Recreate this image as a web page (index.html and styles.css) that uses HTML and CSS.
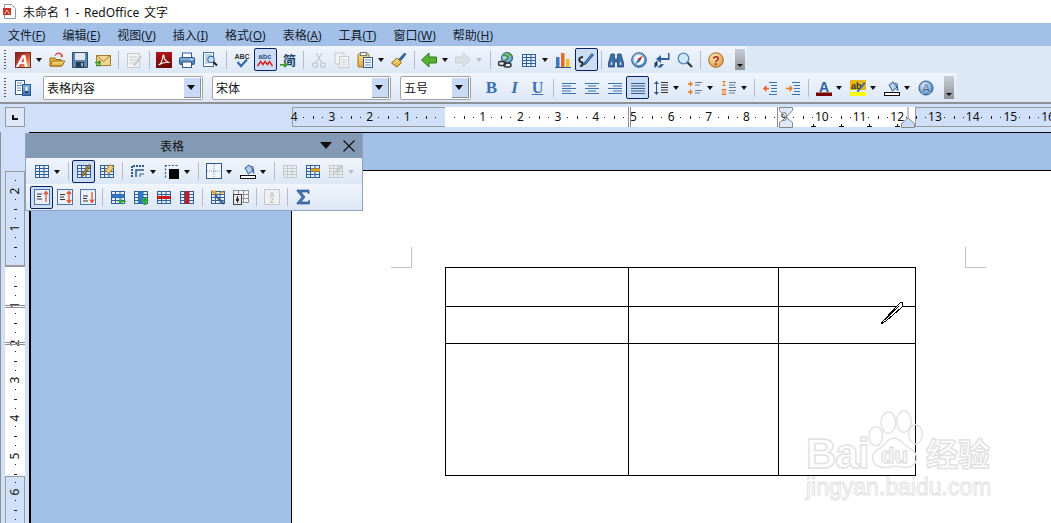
FILE: index.html
```html
<!DOCTYPE html>
<html lang="zh-CN">
<head>
<meta charset="utf-8">
<title>未命名 1 - RedOffice 文字</title>
<link rel="stylesheet" href="styles.css">
</head>
<body>
<svg class="defs" xmlns="http://www.w3.org/2000/svg">
<defs>
<linearGradient id="gRed" x1="0" y1="0" x2="1" y2="1"><stop offset="0" stop-color="#7a1c14"/><stop offset=".5" stop-color="#d04a30"/><stop offset="1" stop-color="#f2c090"/></linearGradient>
<linearGradient id="gPdf" x1="0" y1="0" x2="0" y2="1"><stop offset="0" stop-color="#b01818"/><stop offset="1" stop-color="#6d0808"/></linearGradient>
<linearGradient id="gGold" x1="0" y1="0" x2="0" y2="1"><stop offset="0" stop-color="#fbe08a"/><stop offset="1" stop-color="#e3a63a"/></linearGradient>
<linearGradient id="gBlue" x1="0" y1="0" x2="0" y2="1"><stop offset="0" stop-color="#8fb4de"/><stop offset="1" stop-color="#3c6ea8"/></linearGradient>
<radialGradient id="gHelp" cx=".4" cy=".35" r=".7"><stop offset="0" stop-color="#fff0c8"/><stop offset="1" stop-color="#d9963a"/></radialGradient>
<radialGradient id="gGlobe" cx=".4" cy=".35" r=".7"><stop offset="0" stop-color="#e4f0fb"/><stop offset="1" stop-color="#3f7cc0"/></radialGradient>
<g id="grid"><rect x="1.5" y="2.5" width="13" height="12" fill="#eaf1fa" stroke="#2f5f9c"/><path d="M1.5 5.5h13M1.5 8.5h13M1.5 11.5h13M5.5 2.5v12M10 2.5v12" stroke="#2f5f9c" fill="none"/></g>
<g id="gridg"><rect x="1.5" y="2.5" width="13" height="12" fill="#eceeef" stroke="#c4c8cc"/><path d="M1.5 5.5h13M1.5 8.5h13M1.5 11.5h13M5.5 2.5v12M10 2.5v12" stroke="#c4c8cc" fill="none"/></g>
<g id="bucket"><path d="M5 5l4-3 4 5-4.5 4z" fill="#b9d0ea" stroke="#26578f"/><path d="M11 3l2 1 .5 4" fill="none" stroke="#26578f"/><path d="M13 7l1.500 2.500a1 1 0 0 1-2 0z" fill="#26578f"/><rect x=".5" y="12.500" width="15" height="3" fill="#fff" stroke="#111"/></g>
</defs>
<symbol id="open" viewBox="0 0 16 16"><path d="M1 14V6h5l1 1.500h5V14z" fill="#e8b347" stroke="#9a6d14"/><path d="M1 14l2.500-5H16l-3 5z" fill="url(#gGold)" stroke="#9a6d14"/><path d="M6 3.500C8 .5 11 .5 12.500 3" fill="none" stroke="#d4362a" stroke-width="1.300"/><path d="M11 4.500l3 .5-.5-3z" fill="#d4362a"/></symbol>
<symbol id="save" viewBox="0 0 16 16"><path d="M.5.5h15v15H.5z" fill="#5e83ad" stroke="#2c4f7a"/><rect x="3" y="1" width="10" height="7" fill="#dfe8f2"/><rect x="4" y="10" width="8" height="5.500" fill="#23384f"/><rect x="9" y="11" width="2" height="3.500" fill="#9ab4cf"/></symbol>
<symbol id="mail" viewBox="0 0 16 16"><rect x="1.500" y="3.500" width="14" height="10" fill="#efd48f" stroke="#a47f30"/><path d="M1.500 3.500l7 6 7-6" fill="none" stroke="#a47f30"/><path d="M0 10.500h5M3.500 8.500l2 2-2 2M6 13.500H1" stroke="#2f9a2a" stroke-width="1.300" fill="none"/></symbol>
<symbol id="edit" viewBox="0 0 16 16"><rect x="1.500" y="1.500" width="12" height="14" fill="#f1f2f3" stroke="#c6c9cc"/><path d="M3.500 5h8M3.500 8h6M3.500 11h4" stroke="#c6c9cc"/><path d="M8 12l6-8 1.500 1-6 8-2 .5z" fill="#d2d4d6" stroke="#b9bcbf" stroke-width=".7"/></symbol>
<symbol id="pdf" viewBox="0 0 16 16"><rect width="16" height="16" fill="url(#gPdf)"/><path d="M2.500 13c2-1 4-5 4.500-9 .2-1.500 1.300-1.500 1 .5-.3 2.500 3 6 5.500 6-2.500-.5-7 0-11 2.500z" fill="none" stroke="#fff" stroke-width="1.100"/></symbol>
<symbol id="print" viewBox="0 0 16 16"><rect x="3.500" y="1" width="9" height="5" fill="#fff" stroke="#2d5a8f"/><rect x=".5" y="5.500" width="15" height="7" rx="1" fill="url(#gBlue)" stroke="#2d5a8f"/><rect x="3.500" y="10" width="9" height="5.500" fill="#fff" stroke="#2d5a8f"/><rect x="11.500" y="7" width="2" height="1" fill="#fff"/></symbol>
<symbol id="preview" viewBox="0 0 16 16"><rect x="1.500" y=".5" width="10" height="14" fill="#fff" stroke="#3f6fa5"/><path d="M3 3h7M3 5h4M3 7h3M3 9h3M3 11h4" stroke="#7ea3cc"/><circle cx="9" cy="7.500" r="3.300" fill="#bfe2f5" stroke="#2d5a8f"/><path d="M11.500 10l3.500 3.500" stroke="#222" stroke-width="2"/></symbol>
<symbol id="cut" viewBox="0 0 16 16"><path d="M5 1l6 10M11 1L5 11" stroke="#c3c6c9" stroke-width="1.200"/><circle cx="4" cy="13" r="2.300" fill="none" stroke="#c3c6c9" stroke-width="1.200"/><circle cx="12" cy="13" r="2.300" fill="none" stroke="#c3c6c9" stroke-width="1.200"/></symbol>
<symbol id="copy" viewBox="0 0 16 16"><rect x="1" y="1" width="9" height="11" fill="#f2f3f4" stroke="#c6c9cc"/><rect x="5.500" y="4.500" width="9" height="11" fill="#f2f3f4" stroke="#c6c9cc"/><path d="M7.500 8h5M7.500 10.500h5M7.500 13h5" stroke="#cfd2d5"/></symbol>
<symbol id="paste" viewBox="0 0 16 16"><rect x="1" y="2" width="11" height="13" rx="1" fill="url(#gGold)" stroke="#9a7420"/><rect x="3.500" y=".5" width="6" height="3" fill="#eee" stroke="#777"/><rect x="6.500" y="5.500" width="9" height="10" fill="#fff" stroke="#2d5a8f"/><path d="M8 8h6M8 10.500h6M8 13h6" stroke="#5f8cbe"/></symbol>
<symbol id="brush" viewBox="0 0 16 16"><path d="M.5 11L6 6l4.500 4.500L6 15z" fill="url(#gGold)" stroke="#8a6a18"/><path d="M8 7l5-5.500c1-1 2.500.5 1.500 1.500L10 8.500z" fill="#3c6ea8" stroke="#23466e" stroke-width=".7"/></symbol>
<symbol id="back" viewBox="0 0 16 16"><path d="M.5 8L8 1v4h7.500v6H8v4z" fill="#56b030" stroke="#2f7a1a"/></symbol>
<symbol id="fwd" viewBox="0 0 16 16"><path d="M15.500 8L8 1v4H.5v6H8v4z" fill="#dcdfe3" stroke="#cdd0d4"/></symbol>
<symbol id="link" viewBox="0 0 16 16"><circle cx="9" cy="6" r="5.500" fill="url(#gGlobe)" stroke="#2d5a8f"/><path d="M5 3c2 0 4 .5 5 2s-2 2-3 4M10 1c1 1 3 2 4 3" fill="none" stroke="#3f9c32" stroke-width="2"/><rect x=".5" y="9.500" width="7" height="4" rx="2" fill="none" stroke="#333" stroke-width="1.500"/><rect x="6" y="11" width="7" height="4" rx="2" fill="none" stroke="#333" stroke-width="1.500"/></symbol>
<symbol id="table" viewBox="0 0 16 16"><use href="#grid"/></symbol>
<symbol id="chart" viewBox="0 0 16 16"><rect x="1" y="5" width="3.500" height="10" fill="#3f78bd"/><rect x="6" y="1" width="3.500" height="14" fill="#e86a20"/><rect x="11" y="7" width="3.500" height="8" fill="#f0c020"/><path d="M0 15.500h16" stroke="#2d5a8f"/></symbol>
<symbol id="pen" viewBox="0 0 16 16"><path d="M5 5C1 5 0 9 3 10c3 1 2 4-1 4" fill="none" stroke="#2b2b2b" stroke-width="2"/><path d="M6 11l8-9.500 1.500 1.500L8 12l-2.500 1z" fill="#4a7fc0" stroke="#23466e" stroke-width=".8"/></symbol>
<symbol id="bino" viewBox="0 0 16 16"><path d="M3 2h3.500v5h3V2H13l2.500 9v4H9.500v-5h-3v5H.5v-4z" fill="#3c6ea8" stroke="#23466e" stroke-width=".8"/><path d="M3.500 10v3M12.500 10v3" stroke="#cfe0f5" stroke-width="1.400"/></symbol>
<symbol id="compass" viewBox="0 0 16 16"><circle cx="8" cy="8" r="7.300" fill="url(#gGlobe)" stroke="#2d5a8f"/><circle cx="8" cy="8" r="5" fill="#f4f8fc"/><path d="M12 3.500L9 9 6.500 7z" fill="#d62020"/><path d="M4 12.500L7 7l2.500 2z" fill="#3c6ea8"/></symbol>
<symbol id="arrows" viewBox="0 0 16 16"><path d="M14 1v5H7V3L2 7l5 4V8h8.500V1z" fill="#2d5f9e"/><path d="M.5 11l3-2.500v5l-3 2.500z" fill="#1e3f6b"/><path d="M7 12h3l-3 3.500H3z" fill="#2d5f9e"/></symbol>
<symbol id="zoom" viewBox="0 0 16 16"><circle cx="6.500" cy="6.500" r="5.300" fill="#cfeafa" stroke="#4f86bd" stroke-width="1.300"/><path d="M10.500 10.500l4.500 4.500" stroke="#333" stroke-width="2.200"/></symbol>
<symbol id="style" viewBox="0 0 16 16"><rect x=".5" y=".5" width="9" height="14" fill="#fff" stroke="#2d5a8f"/><path d="M2 3h5M2 5.500h5M2 8h4M2 10.500h4" stroke="#5f8cbe"/><rect x="7.500" y="4.500" width="8" height="11" fill="url(#gBlue)" stroke="#2d5a8f"/><path d="M11.500 7v5" stroke="#fff" stroke-width="2"/><rect x="10" y="11" width="3" height="2" fill="#1e3f6b"/></symbol>
<symbol id="al" viewBox="0 0 16 16"><path d="M1 3.500h14M1 6h9M1 8.500h14M1 11h9M1 13.500h14" stroke="#3a73b4"/></symbol>
<symbol id="ac" viewBox="0 0 16 16"><path d="M1 3.500h14M4 6h8M1 8.500h14M4 11h8M1 13.500h14" stroke="#3a73b4"/></symbol>
<symbol id="ar" viewBox="0 0 16 16"><path d="M1 3.500h14M6 6h9M1 8.500h14M6 11h9M1 13.500h14" stroke="#3a73b4"/></symbol>
<symbol id="aj" viewBox="0 0 16 16"><path d="M1 3.500h14M1 6h14M1 8.500h14M1 11h14M1 13.500h14" stroke="#3a5f8f"/></symbol>
<symbol id="ls" viewBox="0 0 16 16"><path d="M3.500 1.500v13" stroke="#2d5a8f"/><path d="M1 4l2.500-3L6 4zM1 12l2.500 3L6 12z" fill="#2d5a8f"/><path d="M8 2.500h7M8 5h7M8 7.500h7M8 10h7M8 12.500h7" stroke="#333"/></symbol>
<symbol id="plus" viewBox="0 0 16 16"><path d="M1 4h5M3.500 1.500v5M1 12h5M3.500 9.500v5" stroke="#e87a20" stroke-width="1.300"/><path d="M8 2.500h7M8 5h5M8 10.500h7M8 13h5" stroke="#5f7f9f"/></symbol>
<symbol id="num" viewBox="0 0 16 16"><path d="M1.500 1.500h3M3 1.500v4M1.500 5.500h3M.5 9.500h5M2 9.500v5M4 9.500v5M.5 14.500h5" stroke="#e87a20" fill="none"/><path d="M8 2.500h7M8 5h6M8 7.500h7M8 10.500h7M8 13h6" stroke="#5f7f9f"/></symbol>
<symbol id="ind1" viewBox="0 0 16 16"><path d="M7 2.500h8M9 5.500h6M9 8.500h6M9 11.500h6M7 14.500h8" stroke="#3a73b4"/><path d="M7 8.500H2M4.500 6L2 8.500 4.500 11" fill="none" stroke="#e85a20" stroke-width="1.400"/></symbol>
<symbol id="ind2" viewBox="0 0 16 16"><path d="M7 2.500h8M9 5.500h6M9 8.500h6M9 11.500h6M7 14.500h8" stroke="#3a73b4"/><path d="M1 8.500h6M4.500 6L7 8.500 4.500 11" fill="none" stroke="#e87a20" stroke-width="1.400"/></symbol>
<symbol id="bg" viewBox="0 0 16 16"><use href="#bucket"/></symbol>
<symbol id="tdraw" viewBox="0 0 16 16"><use href="#grid"/><path d="M6 11l7-9.500 2 1.500-7 9.500-2.500 1z" fill="#b08a40" stroke="#5a4418" stroke-width=".8"/></symbol>
<symbol id="terase" viewBox="0 0 16 16"><use href="#grid"/><path d="M6 8l5-6.500 4 2.500-5 6.500z" fill="#f0c878" stroke="#9a7420" stroke-width=".8"/></symbol>
<symbol id="bstyle" viewBox="0 0 16 16"><path d="M2 14V3h12" fill="none" stroke="#2d5a8f" stroke-width="2" stroke-dasharray="2 1"/><path d="M6 14V7h8" fill="none" stroke="#2d5a8f" stroke-width="1.500"/><path d="M10 14v-3h4" fill="none" stroke="#2d5a8f"/></symbol>
<symbol id="bcolor" viewBox="0 0 16 16"><path d="M1 2.500h14M1.500 2v13" stroke="#2d5a8f" stroke-width="1.200" stroke-dasharray="2 1.500"/><rect x="5" y="6" width="10" height="10" fill="#050505"/></symbol>
<symbol id="cell" viewBox="0 0 16 16"><rect x=".5" y=".5" width="15" height="15" fill="#f4f8fc" stroke="#2d5a8f"/><path d="M8 1v14M1 8h14" stroke="#6f95c0" stroke-dasharray="1 1"/></symbol>
<symbol id="gridoff" viewBox="0 0 16 16"><use href="#gridg"/></symbol>
<symbol id="rowsel" viewBox="0 0 16 16"><use href="#grid"/><rect x="6" y="5.500" width="9" height="3" fill="#e8a020"/></symbol>
<symbol id="afmt" viewBox="0 0 16 16"><use href="#gridg"/><path d="M7 8l6-6 2 2-6 6-2.500.5z" fill="#c8ccd0"/></symbol>
<symbol id="vt" viewBox="0 0 16 16"><rect x=".5" y=".5" width="15" height="15" fill="#eaf1fa" stroke="#4a76a8"/><path d="M3 5h5M3 7.500h4M3 10h5" stroke="#333"/><path d="M12 13V3M9.800 5.500L12 2.500l2.200 3" fill="none" stroke="#e04a20" stroke-width="1.200"/></symbol>
<symbol id="vmid" viewBox="0 0 16 16"><rect x=".5" y=".5" width="15" height="15" fill="#eaf1fa" stroke="#4a76a8"/><path d="M3 5.500h5M3 8h4M3 10.500h5" stroke="#333"/><path d="M12 2.500v11M9.800 5L12 2.500 14.200 5M9.800 11l2.200 2.500 2.200-2.500" fill="none" stroke="#e04a20" stroke-width="1.200"/></symbol>
<symbol id="vb" viewBox="0 0 16 16"><rect x=".5" y=".5" width="15" height="15" fill="#eaf1fa" stroke="#4a76a8"/><path d="M3 7h5M3 9.500h4M3 12h5" stroke="#333"/><path d="M12 3v10M9.800 10.500L12 13.500l2.200-3" fill="none" stroke="#e04a20" stroke-width="1.200"/></symbol>
<symbol id="irow" viewBox="0 0 16 16"><use href="#grid"/><rect x="1.500" y="5.500" width="13" height="3" fill="#2d7ac0"/><path d="M16 12h-4V9.500L8 12.500l4 3V13h4z" fill="#2aa82a"/></symbol>
<symbol id="icol" viewBox="0 0 16 16"><use href="#grid"/><rect x="5.500" y="2.500" width="4.500" height="12" fill="#2d7ac0"/><path d="M12 8l4 4h-2.500v4h-3v-4H8z" fill="#2aa82a"/></symbol>
<symbol id="drow" viewBox="0 0 16 16"><use href="#grid"/><rect x="1" y="7" width="14" height="3" fill="#c81818"/></symbol>
<symbol id="dcol" viewBox="0 0 16 16"><use href="#grid"/><rect x="6" y="2" width="4" height="13" fill="#c81818"/></symbol>
<symbol id="wand" viewBox="0 0 16 16"><use href="#grid"/><path d="M1 1l3 1 2-1v2l2 2H5L4 7 3 4.500z" fill="#e8a020"/><path d="M12 1l1 2 2 .5-2 .5-1 2-.5-2-2-.5 2-.5z" fill="#e8a020"/><path d="M5 6l9 9" stroke="#3c5f8f" stroke-width="2.200"/></symbol>
<symbol id="prop" viewBox="0 0 16 16"><rect x=".5" y="1.500" width="15" height="12" fill="#f1f3f6" stroke="#8d949c"/><path d="M5.500 1.500v12M10.500 1.500v12M.5 5.500h15M.5 9.500h15" stroke="#8d949c"/><rect x=".5" y="5.500" width="8" height="10" fill="#e6e8ea" stroke="#444"/><path d="M4.500 7v7" stroke="#333"/><rect x="3" y="9.500" width="3" height="2.500" fill="#333"/></symbol>
<symbol id="sum" viewBox="0 0 16 16"><path d="M2 1h12v4l-1.500-2H6l4 5-4 5h7l1.500-2v4H2v-1l5-6-5-6z" fill="#3f78bd" stroke="#23466e" stroke-width=".6"/></symbol>
</svg>

<div class="title"><svg class="doc" viewBox="0 0 13 15"><path d="M1.500.5h7l4 4v10h-11z" fill="#fff" stroke="#8a97a5"/><rect x="0" y="4" width="8" height="7" fill="#c8362a"/><path d="M1.500 10l2.500-4 2.500 4" fill="none" stroke="#f3c0b0"/></svg><span>未命名 1 - RedOffice 文字</span></div>

<nav class="menu"><span>文件(<u>F</u>)</span><span>编辑(<u>E</u>)</span><span>视图(<u>V</u>)</span><span>插入(<u>I</u>)</span><span>格式(<u>O</u>)</span><span>表格(<u>A</u>)</span><span>工具(<u>T</u>)</span><span>窗口(<u>W</u>)</span><span>帮助(<u>H</u>)</span></nav>

<div class="band one"><div class="bar">
<i class="grip"></i>
<b class="btn"><svg class="i" viewBox="0 0 16 16"><rect x=".5" y=".5" width="15" height="15" fill="url(#gRed)" stroke="#7a2b22"/><text x="7.500" y="14.500" text-anchor="middle" font-family="Liberation Sans" font-style="italic" font-size="17" fill="#fff">A</text></svg></b><b class="arr"></b>
<b class="btn"><svg class="i"><use href="#open"/></svg></b>
<b class="btn"><svg class="i"><use href="#save"/></svg></b>
<b class="btn"><svg class="i"><use href="#mail"/></svg></b>
<i class="sep w8"></i>
<b class="btn"><svg class="i"><use href="#edit"/></svg></b>
<i class="sep"></i>
<b class="btn"><svg class="i"><use href="#pdf"/></svg></b>
<b class="btn"><svg class="i"><use href="#print"/></svg></b>
<b class="btn"><svg class="i"><use href="#preview"/></svg></b>
<i class="sep w9"></i>
<b class="btn"><svg class="i" viewBox="0 0 16 16"><text x="8" y="6.500" text-anchor="middle" font-family="Liberation Sans" font-weight="700" font-size="7" fill="#333">ABC</text><path d="M3.500 10l3.500 4 6-6.500" fill="none" stroke="#2f6db0" stroke-width="2.200"/></svg></b>
<b class="btn on"><svg class="i" viewBox="0 0 16 16"><text x="8" y="7" text-anchor="middle" font-family="Liberation Sans" font-size="7.500" fill="#2d5a8f">abc</text><path d="M.5 14l3-4.500 2.500 3 2-3 2.500 3 2-3 3 4.500" fill="none" stroke="#d62020" stroke-width="1.500"/></svg></b>
<b class="btn"><svg class="i" viewBox="0 0 16 16"><text x="9.500" y="12.500" text-anchor="middle" font-family="Noto Sans CJK SC" font-weight="700" font-size="13" fill="#23466e">简</text><path d="M0 12h4V9.500l4 3.500-4 3v-2.200H0z" fill="#3f9c32"/></svg></b>
<i class="sep w8"></i>
<b class="btn"><svg class="i"><use href="#cut"/></svg></b>
<b class="btn"><svg class="i"><use href="#copy"/></svg></b>
<b class="btn"><svg class="i"><use href="#paste"/></svg></b><b class="arr"></b>
<b class="btn"><svg class="i"><use href="#brush"/></svg></b>
<i class="sep"></i>
<b class="btn"><svg class="i"><use href="#back"/></svg></b><b class="arr"></b>
<b class="btn"><svg class="i"><use href="#fwd"/></svg></b><b class="arr off"></b>
<i class="sep w9"></i>
<b class="btn"><svg class="i"><use href="#link"/></svg></b>
<b class="btn"><svg class="i"><use href="#table"/></svg></b><b class="arr"></b>
<b class="btn"><svg class="i"><use href="#chart"/></svg></b>
<b class="btn on"><svg class="i"><use href="#pen"/></svg></b>
<i class="sep"></i>
<b class="btn"><svg class="i"><use href="#bino"/></svg></b>
<b class="btn"><svg class="i"><use href="#compass"/></svg></b>
<b class="btn"><svg class="i"><use href="#arrows"/></svg></b>
<b class="btn"><svg class="i"><use href="#zoom"/></svg></b>
<i class="sep w8"></i>
<b class="btn"><svg class="i" viewBox="0 0 16 16"><circle cx="8" cy="8" r="7.300" fill="url(#gHelp)" stroke="#a86c20"/><text x="8" y="12.500" text-anchor="middle" font-family="Liberation Sans" font-weight="700" font-size="12" fill="#b02a18">?</text></svg></b>
<i class="more"></i>
</div></div>

<div class="band two"><div class="bar">
<i class="grip"></i>
<b class="btn"><svg class="i"><use href="#style"/></svg></b>
<div class="combo c1"><span>表格内容</span><i class="drop"></i></div>
<div class="combo c2"><span>宋体</span><i class="drop"></i></div>
<div class="combo c3"><span>五号</span><i class="drop"></i></div>
<b class="btn fmt bold">B</b>
<b class="btn fmt ital">I</b>
<b class="btn fmt under">U</b>
<i class="sep w8"></i>
<b class="btn"><svg class="i"><use href="#al"/></svg></b>
<b class="btn"><svg class="i"><use href="#ac"/></svg></b>
<b class="btn"><svg class="i"><use href="#ar"/></svg></b>
<b class="btn on"><svg class="i"><use href="#aj"/></svg></b>
<b class="btn"><svg class="i"><use href="#ls"/></svg></b><b class="arr"></b>
<b class="btn"><svg class="i"><use href="#plus"/></svg></b><b class="arr"></b>
<b class="btn"><svg class="i"><use href="#num"/></svg></b><b class="arr"></b>
<i class="sep"></i>
<b class="btn"><svg class="i"><use href="#ind1"/></svg></b>
<b class="btn"><svg class="i"><use href="#ind2"/></svg></b>
<i class="sep w8"></i>
<b class="btn"><svg class="i" viewBox="0 0 16 16"><text x="8" y="11.500" text-anchor="middle" font-family="Liberation Sans" font-weight="700" font-size="14" fill="#2d62a5">A</text><rect y="12.500" width="16" height="3.500" fill="#7c0000"/></svg></b><b class="arr"></b>
<b class="btn"><svg class="i" viewBox="0 0 16 16"><rect width="16" height="10" fill="#e8b818"/><text x="1" y="8.500" font-family="Liberation Sans" font-weight="700" font-size="9" fill="#333">ab</text><path d="M7 11l7-9 1.500 1.500-7 8.500-2 .5z" fill="#3c6ea8"/><rect y="12" width="16" height="4" fill="#ffff00"/></svg></b><b class="arr"></b>
<b class="btn"><svg class="i"><use href="#bg"/></svg></b><b class="arr"></b>
<b class="btn"><svg class="i" viewBox="0 0 16 16"><circle cx="8" cy="8" r="7" fill="url(#gGlobe)" stroke="#2d5a8f"/><text x="8" y="12.500" text-anchor="middle" font-family="Liberation Sans" font-weight="700" font-size="12" fill="#2d5a8f" stroke="#fff" stroke-width=".3">A</text></svg></b>
<i class="more"></i>
</div></div>

<div class="rulerow">
<div class="tab"><i></i></div>
<div class="hr">
<div class="seg s1"><b>4</b><i></i><b>3</b><i></i><b>2</b><i></i><b>1</b><i></i></div>
<div class="seg s2"><i></i><b>1</b><i></i><b>2</b><i></i><b>3</b><i></i><b>4</b><i></i><b>5</b><i></i><b>6</b><i></i><b>7</b><i></i><b>8</b><i></i><b>9</b><i></i><b>10</b><i></i><b>11</b><i></i><b>12</b><i></i></div>
<div class="seg s3"><i></i><b>13</b><i></i><b>14</b><i></i><b>15</b><i></i><b>16</b><i></i></div>
<i class="mk m1"></i><i class="mk m2"></i>
<svg class="hour" viewBox="0 0 14 21"><path d="M.5.5h13v3L7 10.500.5 3.500zM.5 20.500h13v-5L7 10.500.5 15.500z" fill="#c9daf2" fill-opacity=".6" stroke="#888"/></svg>
<svg class="rind" viewBox="0 0 14 21"><path d="M7 0v11" stroke="#888"/><path d="M7 11l6.500 5.500v4H.5v-4z" fill="#c9daf2" stroke="#888"/></svg>
<i class="t t1"></i><i class="t t2"></i><i class="t t3"></i><i class="t t4"></i>
</div>
</div>

<div class="work">
<aside class="side">
<div class="vr">
<div class="vseg v1"><i></i><b>2</b><i></i><b>1</b><i></i></div>
<div class="vseg v2"><i></i><b>1</b><i></i><b>2</b><i></i><b>3</b><i></i><b>4</b><i></i><b>5</b><i></i>
<s class="vm a"></s><s class="vm c"></s></div>
<div class="vseg v3"><i></i><b>6</b><i></i></div>
</div>
</aside>
<main class="area">
<div class="blueband"></div>
<div class="lower">
<div class="gutter"></div>
<div class="page">
<span class="corner cl"></span><span class="corner cr"></span>
<table class="doc-table"><tbody>
<tr class="r1"><td></td><td></td><td></td></tr>
<tr class="r2"><td></td><td></td><td></td></tr>
<tr class="r3"><td></td><td></td><td></td></tr>
</tbody></table>
<svg class="cursor" viewBox="0 0 24 24" shape-rendering="crispEdges"><path d="M1 23l3-4L19 3c2-2 4-2 4 0 0 2-1 3-2 4L6 20z" fill="#fff" stroke="#000"/><path d="M5 19L19 5" stroke="#000"/></svg>
</div>
</div>
</main>
</div>

<section class="panel">
<header class="ptitle"><span>表格</span><svg class="pmenu" viewBox="0 0 12 7"><path d="M0 0h12L6 7z" fill="#111"/></svg><svg class="pclose" viewBox="0 0 12 12"><path d="M.5.5l11 11M11.500.5l-11 11" stroke="#111" stroke-width="1.200"/></svg></header>
<div class="prow">
<b class="btn"><svg class="i"><use href="#table"/></svg></b><b class="arr"></b>
<i class="sep w8"></i>
<b class="btn on"><svg class="i"><use href="#tdraw"/></svg></b>
<b class="btn"><svg class="i"><use href="#terase"/></svg></b>
<i class="sep w8"></i>
<b class="btn"><svg class="i"><use href="#bstyle"/></svg></b><b class="arr"></b>
<b class="btn"><svg class="i"><use href="#bcolor"/></svg></b><b class="arr"></b>
<i class="sep w8"></i>
<b class="btn"><svg class="i"><use href="#cell"/></svg></b><b class="arr"></b>
<b class="btn"><svg class="i"><use href="#bg"/></svg></b><b class="arr"></b>
<i class="sep w8"></i>
<b class="btn"><svg class="i"><use href="#gridoff"/></svg></b>
<b class="btn"><svg class="i"><use href="#rowsel"/></svg></b>
<b class="btn"><svg class="i"><use href="#afmt"/></svg></b><b class="arr off"></b>
</div>
<div class="prow">
<b class="btn on"><svg class="i"><use href="#vt"/></svg></b>
<b class="btn"><svg class="i"><use href="#vmid"/></svg></b>
<b class="btn"><svg class="i"><use href="#vb"/></svg></b>
<i class="sep"></i>
<b class="btn"><svg class="i"><use href="#irow"/></svg></b>
<b class="btn"><svg class="i"><use href="#icol"/></svg></b>
<b class="btn"><svg class="i"><use href="#drow"/></svg></b>
<b class="btn"><svg class="i"><use href="#dcol"/></svg></b>
<i class="sep w8"></i>
<b class="btn"><svg class="i"><use href="#wand"/></svg></b>
<b class="btn"><svg class="i"><use href="#prop"/></svg></b>
<i class="sep w8"></i>
<b class="btn"><svg class="i" viewBox="0 0 16 16"><rect x=".5" y=".5" width="15" height="15" fill="#eef0f2" stroke="#c6c9cc"/><text x="8" y="7.500" text-anchor="middle" font-family="Liberation Sans" font-weight="700" font-size="7" fill="#bfc3c7">A</text><text x="8" y="14" text-anchor="middle" font-family="Liberation Sans" font-weight="700" font-size="7" fill="#bfc3c7">Z</text></svg></b>
<i class="sep w8"></i>
<b class="btn"><svg class="i"><use href="#sum"/></svg></b>
</div>
</section>

<div class="mark">
<svg class="paw" viewBox="0 0 64 64"><ellipse cx="21" cy="13" rx="7.500" ry="11"/><ellipse cx="37" cy="12" rx="7.500" ry="11" /><ellipse cx="8" cy="27" rx="7" ry="10"/><ellipse cx="49" cy="25" rx="7" ry="10"/><path d="M27 29c6 0 9 6 14 9 7 4 10 8 9 13-1 7-8 9-14 8-6-1-9-2-16 0-7 1-14-1-15-8-1-6 3-9 8-12 6-4 7-10 14-10z"/></svg>
<span class="wm bai">Bai</span><span class="wm du">du</span><span class="wm jy">经验</span><span class="wm url">jingyan.baidu.com</span>
</div>
</body>
</html>
```
FILE: styles.css
```css
* { box-sizing: border-box; }
html, body { margin: 0; padding: 0; }
body {
  width: 1051px; height: 523px; overflow: hidden; position: relative;
  background: #fff; color: #111;
  font-family: "Noto Sans", "Noto Sans CJK SC", sans-serif;
  display: flex; flex-direction: column;
}
.defs { position: absolute; width: 0; height: 0; }
.title { height: 23px; display: flex; align-items: center; padding-left: 3px; font-size: 12px; word-spacing: 1.500px; letter-spacing: .05px; background: #fff; }
.title span { margin-left: 7px; }
.doc { width: 13px; height: 15px; }

.menu { height: 23px; background: #a2c0e7; display: flex; align-items: center; gap: 17px; padding-left: 8px; font-size: 12px; color: #14202e; }
.menu u { text-underline-offset: 1px; }

.band { background: #dde8f6; display: flex; }
.band.one { height: 27px; }
.band.two { height: 29px; }
.bar { display: flex; align-items: center; height: 100%; padding-left: 4px; background: linear-gradient(#f1f5fc, #dce7f5); position: relative; }
.one .bar { width: 747px; }
.two .bar { width: 956px; }
.grip { width: 2px; height: 20px; margin-right: 5.500px; background: repeating-linear-gradient(#555 0 1px, transparent 1px 3px); }

.btn { width: 23px; height: 23px; flex: none; display: flex; align-items: center; justify-content: center; }
.btn.on { border: 1px solid #0b2267; border-radius: 2px; background: #ccdcf3; }
.i { width: 16px; height: 16px; display: block; }
.arr { width: 11px; height: 23px; flex: none; position: relative; }
.arr::after { content: ""; position: absolute; left: 1px; top: 10px; border: 3.500px solid transparent; border-top: 4px solid #111; border-bottom: 0; }
.arr.off::after { border-top-color: #b9bec4; }
.sep { width: 7px; height: 18px; flex: none; background: linear-gradient(#b4bcc7, #b4bcc7) center / 1px 100% no-repeat; }
.sep.w8 { width: 8px; }
.sep.w9 { width: 9px; }
.more { width: 10px; height: 21px; margin-left: 7px; flex: none; background: linear-gradient(#c6ced9, #8f9396); position: relative; }
.two .more { height: 23px; }
.more::after { content: ""; position: absolute; left: 2px; bottom: 3px; border: 3px solid transparent; border-top: 3px solid #111; border-bottom: 0; }

.combo { height: 24px; flex: none; background: #fff; border: 1px solid #a3a3a3; border-radius: 2px; display: flex; align-items: center; justify-content: space-between; padding: 0 1px 0 3px; font-size: 12px; color: #111; }
.c1 { width: 160px; margin-left: 8.500px; }
.c2 { width: 179px; margin-left: 9px; }
.c3 { width: 71px; margin-left: 9px; margin-right: 9px; }
.drop { width: 17px; height: 20px; background: #c8daf5; border-right: 1px solid #8d8d8d; border-bottom: 1px solid #8d8d8d; position: relative; }
.drop::after { content: ""; position: absolute; left: 3px; top: 7px; border: 4.500px solid transparent; border-top: 5px solid #111; border-bottom: 0; }
.fmt { font-family: "Liberation Serif", serif; font-size: 17px; font-weight: 700; color: #3a72b4; }
.fmt.ital { font-style: italic; }
.fmt.under { text-decoration: underline; font-size: 16px; }

.rulerow { height: 30px; border-top: 2px solid #8e9195; background: #cfe0f8; display: flex; padding: 3px 0 0 5px; align-items: flex-start; }
.tab { width: 20px; height: 20px; border: 1px solid #9a9a9a; background: #dde9f9; position: relative; flex: none; }
.tab i { position: absolute; left: 6px; top: 7px; width: 6px; height: 5px; border-left: 2px solid #111; border-bottom: 2px solid #111; }
.hr { margin-left: 267px; width: 759px; height: 20px; flex: none; display: flex; position: relative; font-size: 12px; color: #111; }
.seg { display: flex; align-items: center; height: 20px; flex: none; }
.seg b { width: 9.425px; flex: none; display: flex; justify-content: center; font-weight: 400; line-height: 14px; }
.seg i {
  width: 28.275px; height: 100%; flex: none;
  background:
    linear-gradient(#222, #222) 4px 50% / 1px 1px no-repeat,
    linear-gradient(#222, #222) 14px 50% / 1px 3px no-repeat,
    linear-gradient(#222, #222) 23px 50% / 1px 1px no-repeat;
}
.s1 { width: 153px; background: #cfe0f8; border: 1px solid #9a9a9a; border-right: 0; }
.s1 b:first-child { margin-left: -3.500px; }
.s2 { width: 470px; background: #fff; overflow: hidden; padding-left: 4.700px; }
.s3 { width: 136px; background: #cfe0f8; border: 1px solid #9a9a9a; border-right: 0; overflow: hidden; }
.s3 i:first-child { margin-left: -14px; }
.mk { position: absolute; top: 0; height: 20px; width: 1px; background: #8f8f8f; }
.m1 { left: 336px; box-shadow: 2px 0 0 #8f8f8f; }
.m2 { left: 485px; }
.hour { position: absolute; left: 487px; top: 0; width: 14px; height: 21px; }
.rind { position: absolute; left: 609px; top: 0; width: 14px; height: 21px; }
.t { position: absolute; top: 17px; width: 5px; height: 3px; background: linear-gradient(#111, #111) center / 1px 100% no-repeat, linear-gradient(#111, #111) bottom / 100% 1px no-repeat; }
.t1 { left: 519px; } .t2 { left: 547px; } .t3 { left: 575px; } .t4 { left: 603px; }

.work { flex: 1; display: flex; min-height: 0; }
.side { width: 31px; flex: none; background: #cfe0f8; border-left: 1px solid #8e9195; border-right: 2px solid #000; padding-left: 4px; }
.vr { margin-top: 39px; width: 20px; display: flex; flex-direction: column; font-size: 12px; }
.vseg { display: flex; flex-direction: column; align-items: center; overflow: hidden; flex: none; position: relative; width: 20px; }
.vseg b { height: 9.425px; flex: none; display: flex; align-items: center; justify-content: center; writing-mode: vertical-rl; transform: rotate(180deg); font-weight: 400; line-height: 14px; width: 20px; }
.vseg i {
  height: 28.275px; width: 100%; flex: none;
  background:
    linear-gradient(#222, #222) 50% 4px / 1px 1px no-repeat,
    linear-gradient(#222, #222) 50% 14px / 3px 1px no-repeat,
    linear-gradient(#222, #222) 50% 23px / 1px 1px no-repeat;
}
.v1 { height: 96px; background: #cfe0f8; border: 1px solid #9a9a9a; border-bottom-width: 2px; justify-content: flex-end; padding-bottom: 4px; }
.v2 { height: 209px; background: #fff; padding-top: 4.700px; }
.v3 { height: 60px; background: #cfe0f8; border: 1px solid #9a9a9a; border-bottom: 0; }
.v3 i:first-child { margin-top: -18.300px; }
.vm { position: absolute; left: 0; width: 20px; height: 1px; background: #8f8f8f; box-shadow: 0 2px 0 #8f8f8f; }
.vm.a { top: 38px; }
.vm.c { top: 75px; }

.area { flex: 1; display: flex; flex-direction: column; min-width: 0; border-top: 1px solid #000; background: #a2c0e7; }
.blueband { height: 37px; flex: none; }
.lower { flex: 1; display: flex; min-height: 0; }
.gutter { width: 260px; flex: none; }
.page { flex: 1; background: #fff; border-top: 1px solid #000; border-left: 1px solid #000; padding: 96px 0 0 152px; position: relative; }
.corner { position: absolute; width: 21px; height: 21px; top: 76px; border-bottom: 1px solid #c2c2c2; }
.cl { left: 99px; border-right: 1px solid #c2c2c2; }
.cr { left: 673px; border-left: 1px solid #c2c2c2; }
.doc-table { border-collapse: collapse; table-layout: fixed; width: 470px; height: 209px; margin-left: 1px; }
.doc-table td { border: 1px solid #000; padding: 0; width: 150px; }
.doc-table td:first-child { width: 183px; }
.doc-table td:last-child { width: 137px; }
.r1 { height: 39px; } .r2 { height: 37px; } .r3 { height: 132px; }
.cursor { position: absolute; left: 588px; top: 130px; width: 24px; height: 24px; }

.panel { position: absolute; left: 25px; top: 133px; width: 338px; height: 78px; border: 1px solid #8ea3c2; background: #dce7f5; }
.ptitle { height: 24px; background: #8499b4; display: flex; align-items: center; position: relative; padding-left: 134px; font-size: 12px; color: #111; }
.pmenu { position: absolute; left: 294px; top: 8px; width: 12px; height: 7px; }
.pclose { position: absolute; left: 317px; top: 6px; width: 12px; height: 12px; }
.prow { height: 26px; display: flex; align-items: center; padding-left: 4px; background: linear-gradient(#f1f5fc, #dce7f5); }

.mark { position: absolute; left: 806px; top: 410px; width: 190px; height: 92px; }
.paw { position: absolute; left: 62px; top: 0; width: 62px; height: 62px; fill: none; stroke: #e4e4e4; stroke-width: 1.600; }
.wm { position: absolute; color: transparent; -webkit-text-stroke: 1.500px #e2e2e2; line-height: 1; white-space: nowrap; }
.bai { left: 0; top: 23px; font: 700 42px/1 "Liberation Sans", sans-serif; letter-spacing: -1px; }
.du { left: 75px; top: 35px; font: 700 22px/1 "Liberation Sans", sans-serif; }
.jy { left: 120px; top: 26px; font: 700 32px/1 "Noto Sans CJK SC", sans-serif; }
.url { left: 0; top: 66px; font: 400 23px/1 "Liberation Sans", sans-serif; -webkit-text-stroke-width: 1px; }
```
